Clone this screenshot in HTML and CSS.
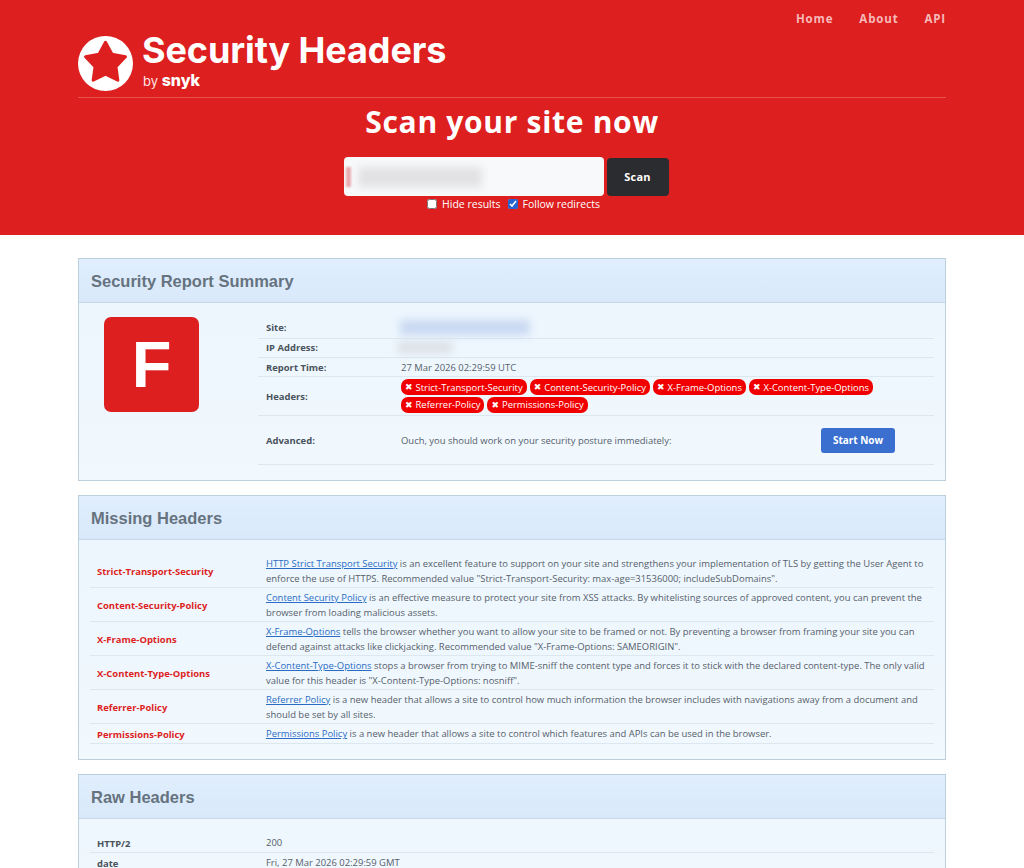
FILE: index.html
```html
<!DOCTYPE html>
<html lang="en">
<head>
<meta charset="utf-8">
<title>Security Headers</title>
<link rel="stylesheet" href="styles.css">
</head>
<body>
<header class="hero">
  <div class="wrap">
    <nav class="nav"><a>Home</a><a>About</a><a>API</a></nav>
    <div class="brand">
      <svg class="star" viewBox="0 0 55 55" width="55" height="55" aria-hidden="true">
        <circle cx="27.5" cy="27.5" r="27.5" fill="#fff"/>
        <path d="M27.5 6.2 L33.97 18.3 L47.47 20.71 L37.96 30.6 L39.84 44.19 L27.5 38.2 L15.16 44.19 L17.04 30.6 L7.53 20.71 L21.03 18.3 Z" fill="#dd1f1f" stroke="#dd1f1f" stroke-width="3" stroke-linejoin="round"/>
      </svg>
      <div class="brand-text">
        <div class="brand-name">Security Headers</div>
        <div class="brand-by">by <b>snyk</b></div>
      </div>
    </div>
    <h1 class="title">Scan your site now</h1>
    <form class="scan">
      <div class="scan-row">
        <div class="url"><span class="url-caret"></span><span class="url-blur"></span></div>
        <button class="scan-btn" type="button">Scan</button>
      </div>
      <div class="opts">
        <label><input type="checkbox"> Hide results</label>
        <label><input type="checkbox" checked> Follow redirects</label>
      </div>
    </form>
  </div>
</header>
<main class="wrap main">
  <section class="card">
    <h2 class="card-head">Security Report Summary</h2>
    <div class="summary">
      <div class="grade-col"><div class="grade">F</div></div>
      <div class="info">
        <div class="irow r19 up2"><div class="k">Site:</div><div class="v"><span class="blur blur-site"></span></div></div>
        <div class="irow r19 up1"><div class="k">IP Address:</div><div class="v"><span class="blur blur-ip"></span></div></div>
        <div class="irow r19"><div class="k">Report Time:</div><div class="v">27 Mar 2026 02:29:59 UTC</div></div>
        <div class="irow r39"><div class="k">Headers:</div><div class="v pills">
          <span class="pill"><i>✖</i>Strict-Transport-Security</span>
          <span class="pill"><i>✖</i>Content-Security-Policy</span>
          <span class="pill"><i>✖</i>X-Frame-Options</span>
          <span class="pill"><i>✖</i>X-Content-Type-Options</span>
          <span class="pill"><i>✖</i>Referrer-Policy</span>
          <span class="pill"><i>✖</i>Permissions-Policy</span>
        </div></div>
        <div class="irow r49"><div class="k">Advanced:</div><div class="v adv"><span>Ouch, you should work on your security posture immediately:</span><a class="start">Start Now</a></div></div>
      </div>
    </div>
  </section>
  <section class="card">
    <h2 class="card-head">Missing Headers</h2>
    <div class="rows">
      <div class="row"><div class="rk red">Strict-Transport-Security</div><div class="rv"><a>HTTP Strict Transport Security</a> is an excellent feature to support on your site and strengthens your implementation of TLS by getting the User Agent to enforce the use of HTTPS. Recommended value "Strict-Transport-Security: max-age=31536000; includeSubDomains".</div></div>
      <div class="row"><div class="rk red">Content-Security-Policy</div><div class="rv"><a>Content Security Policy</a> is an effective measure to protect your site from XSS attacks. By whitelisting sources of approved content, you can prevent the browser from loading malicious assets.</div></div>
      <div class="row"><div class="rk red">X-Frame-Options</div><div class="rv"><a>X-Frame-Options</a> tells the browser whether you want to allow your site to be framed or not. By preventing a browser from framing your site you can defend against attacks like clickjacking. Recommended value "X-Frame-Options: SAMEORIGIN".</div></div>
      <div class="row"><div class="rk red">X-Content-Type-Options</div><div class="rv"><a>X-Content-Type-Options</a> stops a browser from trying to MIME-sniff the content type and forces it to stick with the declared content-type. The only valid value for this header is "X-Content-Type-Options: nosniff".</div></div>
      <div class="row"><div class="rk red">Referrer-Policy</div><div class="rv"><a>Referrer Policy</a> is a new header that allows a site to control how much information the browser includes with navigations away from a document and should be set by all sites.</div></div>
      <div class="row"><div class="rk red">Permissions-Policy</div><div class="rv"><a>Permissions Policy</a> is a new header that allows a site to control which features and APIs can be used in the browser.</div></div>
    </div>
  </section>
  <section class="card">
    <h2 class="card-head">Raw Headers</h2>
    <div class="rows">
      <div class="row"><div class="rk">HTTP/2</div><div class="rv">200</div></div>
      <div class="row"><div class="rk">date</div><div class="rv">Fri, 27 Mar 2026 02:29:59 GMT</div></div>
    </div>
  </section>
</main>
</body>
</html>
```

FILE: styles.css
```css
* { box-sizing: border-box; }
html, body { margin: 0; height: 868px; overflow: hidden; background: #fff; }
body { font-family: "Open Sans", "Liberation Sans", sans-serif; font-size: 9.45px; color: #56606a; }
.wrap { width: 868px; margin: 0 auto; }
.hero { background: #dd1f1f; height: 235px; color: #fff; }
.hero .wrap { height: 235px; display: flex; flex-direction: column; }
.nav { display: flex; justify-content: flex-end; gap: 26px; padding-top: 11px; height: 36px; font-size: 11.5px; font-weight: 700; letter-spacing: 0.85px; color: #f7b9b9; line-height: 16px; }
.brand { display: flex; align-items: center; gap: 9px; height: 62px; border-bottom: 1px solid #e8504a; padding-bottom: 6px; }
.star { flex: none; }
.brand-text { margin-top: 1px; }
.brand-name { font-family: "Inter", sans-serif; font-weight: 700; font-size: 36px; line-height: 34px; letter-spacing: -0.1px; color: #fff; margin-top: -6px; }
.brand-by { font-family: "Inter", sans-serif; font-size: 13px; line-height: 18px; padding-left: 1px; margin-top: 4px; color: #fbe4e4; }
.brand-by b { font-size: 16px; font-weight: 800; color: #fff; }
.title { margin: 6px 0 0; text-align: center; font-size: 30px; line-height: 36px; font-weight: 700; letter-spacing: 0.7px; color: #fff; }
.scan { display: flex; flex-direction: column; align-items: center; margin-top: 17px; }
.scan-row { display: flex; gap: 3px; align-items: flex-end; margin-right: 12px; }
.url { width: 260px; height: 39px; background: #f8f9fa; border-radius: 4px; position: relative; overflow: hidden; }
.url-caret { position: absolute; left: 2px; top: 10px; width: 5px; height: 20px; background: #e9a9b0; filter: blur(1px); }
.url-blur { position: absolute; left: 14px; top: 10px; width: 124px; height: 20px; background: #e2e2e4; filter: blur(4px); }
.scan-btn { width: 62px; height: 38px; border: 0; padding: 0 0 2px; border-radius: 4px; background: #2a2c30; color: #fff; font: 700 11px "Open Sans", sans-serif; letter-spacing: 0.2px; }
.opts { display: flex; gap: 7px; font-size: 10.5px; line-height: 16px; color: #fff; margin-left: 3px; }
.opts label { display: flex; align-items: center; gap: 5px; }
.opts input { margin: 0; width: 10px; height: 10px; accent-color: #2563d0; }
.main { padding-top: 23px; }
.card { border: 1px solid #bccfdc; background: linear-gradient(#ecf6fe, #f1f8fe); margin-bottom: 14px; }
.card-head { margin: 0; height: 44px; padding: 0 12px; font: 700 16.5px/44px "Liberation Sans", Arial, sans-serif; color: #66737f; background: linear-gradient(#e0eefd, #d9e9fb); border-bottom: 1px solid #c7d7e4; }
.summary { display: flex; padding: 14px 11px 0 25px; height: 177px; }
.grade-col { width: 154px; flex: none; }
.grade { width: 95px; height: 95px; border-radius: 7px; background: #dd1f1f; color: #fff; font: 700 65px/95px "Liberation Sans", Arial, sans-serif; text-align: center; }
.info { flex: 1; padding-top: 3px; }
.irow { display: flex; align-items: center; border-bottom: 1px solid #dce7f0; }
.r19 { height: 19px; }
.r39 { height: 39px; }
.r49 { height: 49px; }
.up2 { padding-bottom: 3px; }
.up1 { padding-bottom: 2px; }
.k { width: 143px; flex: none; padding-left: 8px; font-weight: 700; color: #4a535c; }
.v { flex: 1; min-width: 0; }
.blur { display: block; filter: blur(4px); }
.blur-site { width: 130px; height: 15px; margin-left: -1px; background: #c9d8f2; }
.blur-ip { width: 54px; height: 11px; margin-left: -3px; background: #dadfe4; }
.pills { display: flex; flex-wrap: wrap; gap: 1.5px 3px; }
.pill { display: inline-flex; align-items: center; height: 16px; padding: 0 4px; border-radius: 7px; background: #f00000; color: #fff; white-space: nowrap; }
.pill i { font: normal 9px "DejaVu Sans", sans-serif; margin-right: 3px; }
.adv { display: flex; align-items: center; justify-content: space-between; padding-right: 39px; }
.start { width: 74px; height: 25px; border-radius: 3px; background: #3a6fd0; color: #fff; font-weight: 700; font-size: 10px; line-height: 24px; text-align: center; }
.rows { padding: 14px 11px 15px; }
.row { display: flex; align-items: center; padding-top: 1px; border-bottom: 1px solid #dce7f0; min-height: 20px; }
.rk { width: 176px; flex: none; padding-left: 7px; font-weight: 700; color: #4a535c; }
.rk.red { color: #dd1f1f; }
.rv { flex: 1; padding: 2px 4px 1px 0; line-height: 14.5px; }
.rv a { color: #2a6cc4; text-decoration: underline; }
```
